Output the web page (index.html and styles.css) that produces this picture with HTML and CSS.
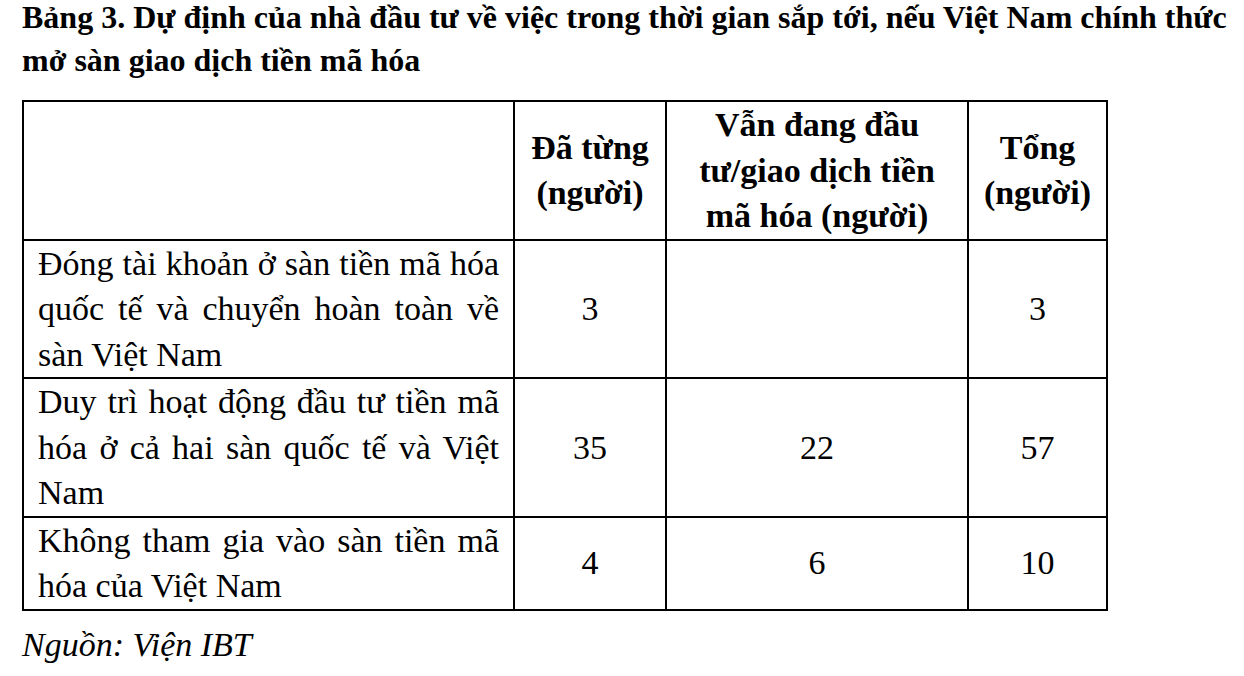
FILE: index.html
```html
<!DOCTYPE html>
<html lang="vi">
<head>
<meta charset="utf-8">
<title>Bảng 3</title>
<link rel="stylesheet" href="styles.css">
</head>
<body>
<main class="doc">
  <h1 class="caption">Bảng 3. Dự định của nhà đầu tư về việc trong thời gian sắp tới, nếu Việt Nam chính thức<br>mở sàn giao dịch tiền mã hóa</h1>
  <table class="data">
    <colgroup>
      <col class="c1">
      <col class="c2">
      <col class="c3">
      <col class="c4">
    </colgroup>
    <thead>
      <tr>
        <th></th>
        <th>Đã từng (người)</th>
        <th class="wide">Vẫn đang đầu tư/giao dịch tiền mã hóa (người)</th>
        <th>Tổng (người)</th>
      </tr>
    </thead>
    <tbody>
      <tr>
        <td class="label">Đóng tài khoản ở sàn tiền mã hóa quốc tế và chuyển hoàn toàn về sàn Việt Nam</td>
        <td>3</td>
        <td></td>
        <td>3</td>
      </tr>
      <tr>
        <td class="label">Duy trì hoạt động đầu tư tiền mã hóa ở cả hai sàn quốc tế và Việt Nam</td>
        <td>35</td>
        <td>22</td>
        <td>57</td>
      </tr>
      <tr>
        <td class="label">Không tham gia vào sàn tiền mã hóa của Việt Nam</td>
        <td>4</td>
        <td>6</td>
        <td>10</td>
      </tr>
    </tbody>
  </table>
  <p class="source">Nguồn: Viện IBT</p>
</main>
</body>
</html>
```

FILE: styles.css
```css
html, body {
  margin: 0;
  padding: 0;
  background: #ffffff;
}

body {
  font-family: "Liberation Serif", "Times New Roman", serif;
  color: #000000;
}

.doc {
  padding: 0 0 0 22px;
}

.caption {
  margin: -4px 0 0 0;
  font-size: 32px;
  line-height: 43px;
  font-weight: bold;
  white-space: nowrap;
}

.data {
  margin-top: 18px;
  border-collapse: collapse;
  table-layout: fixed;
  width: 1084px;
  font-size: 34px;
  line-height: 45.5px;
}

.c1 { width: 491px; }
.c2 { width: 152px; }
.c3 { width: 302px; }
.c4 { width: 139px; }

.data th,
.data td {
  border: 2px solid #000000;
  padding: 0 4px;
  text-align: center;
  vertical-align: middle;
}

.data th {
  font-weight: bold;
}

.data th.wide {
  padding: 0 20px;
}

.data td.label {
  text-align: justify;
  padding: 0 14px 0 14px;
}

.source {
  margin: 11px 0 0 0;
  font-size: 34px;
  line-height: 45px;
  font-style: italic;
}
```
